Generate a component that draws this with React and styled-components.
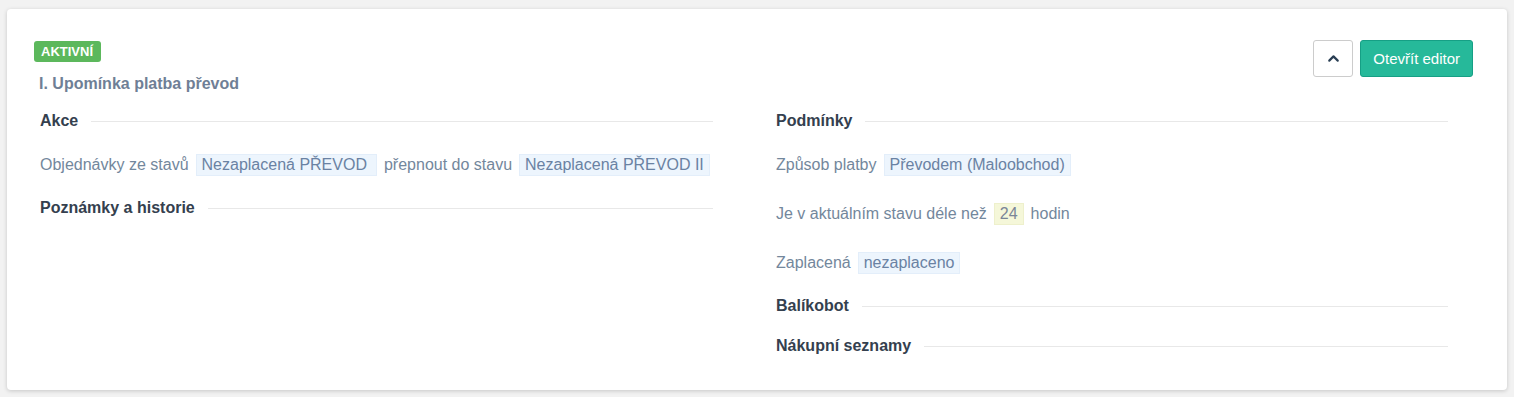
import styled, { createGlobalStyle } from 'styled-components'
import { ChevronUp } from 'lucide-react'

const Global = createGlobalStyle`
  body {
    margin: 0;
    background: #f2f2f2;
    font-family: "Liberation Sans", Arial, sans-serif;
    color: #73879c;
  }
`

const Page = styled.div`
  padding: 9px 7px 7px 7px;
`

const Card = styled.div`
  box-sizing: border-box;
  height: 381px;
  background: #fff;
  border-radius: 4px;
  box-shadow: 0 1px 4px rgba(0, 0, 0, 0.18);
  padding: 32px 34px 0 27px;
  overflow: hidden;
`

const Header = styled.div`
  display: flex;
  justify-content: space-between;
  align-items: flex-start;
`

const Badge = styled.span`
  display: inline-block;
  background: #5cb85c;
  color: #fff;
  font-size: 13px;
  font-weight: 700;
  line-height: 21px;
  padding: 0 8px 0 7px;
  border-radius: 3px;
`

const Title = styled.div`
  margin: 12px 0 0 5px;
  font-size: 16px;
  font-weight: 700;
  color: #6f7f96;
  line-height: 20px;
`

const Actions = styled.div`
  display: flex;
  gap: 7px;
  margin-top: -1px;
`

const IconButton = styled.button`
  width: 40px;
  height: 37px;
  display: flex;
  align-items: center;
  justify-content: center;
  background: #fff;
  border: 1px solid #ccc;
  border-radius: 3px;
  color: #2a3f54;
  padding: 0;
`

const PrimaryButton = styled.button`
  height: 37px;
  padding: 0 12px;
  background: #26b99a;
  border: 1px solid #169f85;
  border-radius: 3px;
  color: #fff;
  font-family: "Liberation Sans", Arial, sans-serif;
  font-size: 15px;
`

const Columns = styled.div`
  display: grid;
  grid-template-columns: 673px 672px;
  column-gap: 63px;
  margin: 17px 0 0 6px;
`

const Column = styled.div`
  display: flex;
  flex-direction: column;
`

const Heading = styled.div`
  display: flex;
  align-items: center;
  gap: 13px;
  height: 20px;
  margin-bottom: 20px;
  font-size: 16px;
  font-weight: 700;
  color: #34404e;
  white-space: nowrap;

  &::after {
    content: '';
    flex: 1;
    height: 1px;
    background: #e8e8e8;
  }
`

const RowList = styled.div`
  display: flex;
  flex-direction: column;
  gap: 21px;
  margin-bottom: 19px;
`

const Row = styled.div`
  display: flex;
  align-items: center;
  height: 28px;
  font-size: 16px;
  gap: 7px;
`

const Tag = styled.span`
  display: inline-block;
  line-height: 20px;
  background: ${p => (p.$tone === 'yellow' ? '#f5f7d9' : '#edf5fd')};
  border: 1px solid ${p => (p.$tone === 'yellow' ? '#eef0cc' : '#e3eefa')};
  color: ${p => (p.$tone === 'yellow' ? '#7a8597' : '#6a82a3')};
  padding: 0 ${p => (p.$wide ? '9px' : '5px')} 0 5px;
`

const App = () => {
  return (
    <Page>
      <Global />
      <Card>
        <Header>
          <div>
            <Badge>AKTIVNÍ</Badge>
            <Title>I. Upomínka platba převod</Title>
          </div>
          <Actions>
            <IconButton>
              <ChevronUp size={17} strokeWidth={3} />
            </IconButton>
            <PrimaryButton>Otevřít editor</PrimaryButton>
          </Actions>
        </Header>
        <Columns>
          <Column>
            <Heading>Akce</Heading>
            <RowList>
              <Row>
                Objednávky ze stavů <Tag $wide>Nezaplacená PŘEVOD</Tag> přepnout do stavu{' '}
                <Tag>Nezaplacená PŘEVOD II</Tag>
              </Row>
            </RowList>
            <Heading>Poznámky a historie</Heading>
          </Column>
          <Column>
            <Heading>Podmínky</Heading>
            <RowList>
              <Row>
                Způsob platby <Tag>Převodem (Maloobchod)</Tag>
              </Row>
              <Row>
                Je v aktuálním stavu déle než <Tag $tone="yellow">24</Tag> hodin
              </Row>
              <Row>
                Zaplacená <Tag>nezaplaceno</Tag>
              </Row>
            </RowList>
            <Heading>Balíkobot</Heading>
            <Heading>Nákupní seznamy</Heading>
          </Column>
        </Columns>
      </Card>
    </Page>
  )
}

export default App
